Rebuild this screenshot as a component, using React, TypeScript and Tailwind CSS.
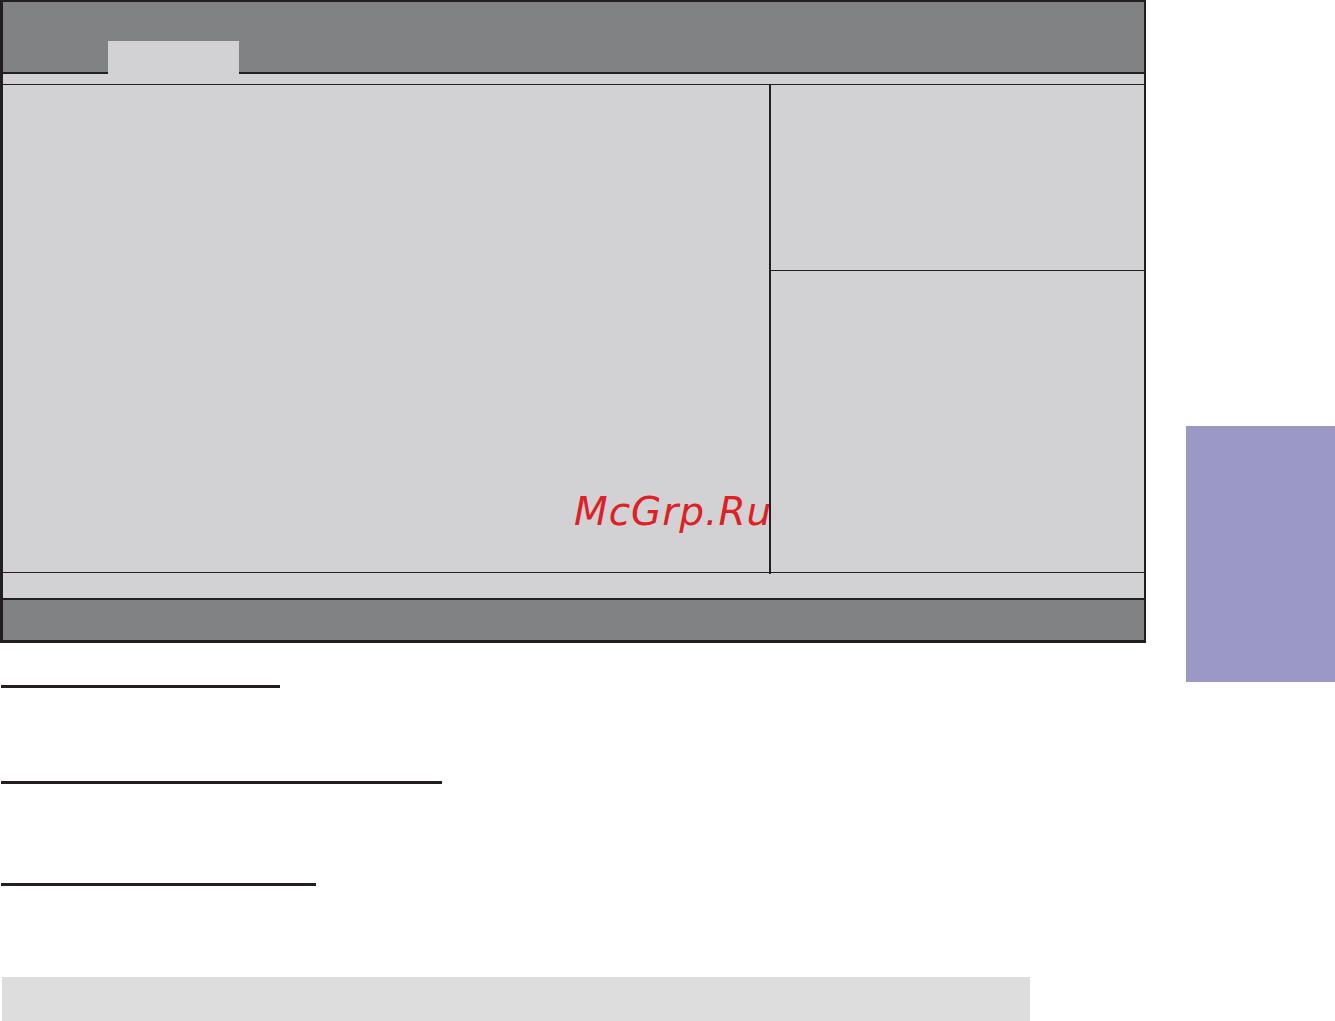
export default function App() {
  return (
    <div className="relative w-[1335px] h-[1021px] bg-white overflow-hidden">
      {/* BIOS screen frame */}
      <div className="w-[1146px] h-[643px] flex flex-col border-t-2 border-b-[3px] border-l-[3px] border-r-2 border-[#231f20] bg-[#d2d2d4]">
        {/* header with tab */}
        <div className="h-[72px] flex items-end bg-[#818284]">
          <div className="w-[105px] h-[2px] bg-[#231f20]" />
          <div className="w-[131px] h-[33px] bg-[#d2d2d4]" />
          <div className="flex-1 h-[2px] bg-[#231f20]" />
        </div>
        <div className="h-[11px] border-b border-[#231f20]" />

        {/* main area */}
        <div className="flex h-[487px]">
          <div className="relative flex-1">
            <span className="absolute left-[571px] top-[407px] italic text-[39px] leading-none tracking-[1px] text-[#dd2126] font-['DejaVu_Sans',sans-serif]">
              McGrp.Ru
            </span>
          </div>
          <div className="relative z-10 w-[2px] h-[489px] bg-[#231f20]" />
          <div className="w-[373px] flex flex-col">
            <div className="h-[186px] border-b border-[#231f20]" />
            <div className="flex-1" />
          </div>
        </div>

        {/* bottom strip + footer */}
        <div className="h-[26px] border-t border-[#231f20]" />
        <div className="flex-1 border-t-2 border-[#231f20] bg-[#818284]" />
      </div>

      {/* section underlines */}
      <div className="ml-[1px] mt-[42px] w-[279px] h-[3px] bg-[#231f20]" />
      <div className="ml-[1px] mt-[93px] w-[441px] h-[3px] bg-[#231f20]" />
      <div className="ml-[1px] mt-[99px] w-[315px] h-[3px] bg-[#231f20]" />

      {/* note bar */}
      <div className="ml-[2px] mt-[91px] w-[1028px] h-[44px] bg-[#dcdddc]" />

      {/* side chapter tab */}
      <div className="absolute left-[1186px] top-[426px] w-[149px] h-[256px] bg-[#9b98c6]" />
    </div>
  );
}
